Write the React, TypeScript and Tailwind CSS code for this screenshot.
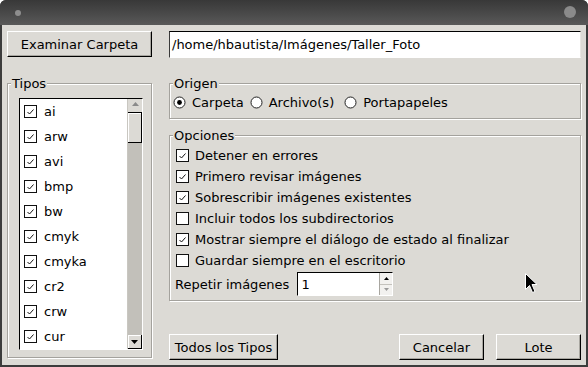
import React from "react";

const CheckBox = ({ checked }: { checked: boolean }) => (
  <svg width="13" height="13" viewBox="0 0 13 13" className="shrink-0">
    <rect x="0.5" y="0.5" width="12" height="12" fill="#fff" stroke="#111" />
    {checked && (
      <path d="M3.5 7 L5.5 9 L9.5 4.5" fill="none" stroke="#111" strokeWidth="1" />
    )}
  </svg>
);

const Radio = ({ selected }: { selected: boolean }) => (
  <svg width="13" height="13" viewBox="0 0 13 13" className="shrink-0">
    <circle cx="6.5" cy="6.5" r="5.5" fill="#fff" stroke="#222" />
    {selected && <circle cx="6.5" cy="6.5" r="2.4" fill="#000" />}
  </svg>
);

const Btn = ({ children, className = "" }: { children: React.ReactNode; className?: string }) => (
  <div
    className={
      "h-[26px] flex items-center justify-center bg-[#dcdad5] border border-t-white border-l-white border-b-black border-r-black shadow-[inset_-1px_-1px_0_#a8a6a0] " +
      className
    }
  >
    {children}
  </div>
);

const tipos = ["ai", "arw", "avi", "bmp", "bw", "cmyk", "cmyka", "cr2", "crw", "cur"];

const opciones: [string, boolean][] = [
  ["Detener en errores", true],
  ["Primero revisar imágenes", true],
  ["Sobrescribir imágenes existentes", true],
  ["Incluir todos los subdirectorios", false],
  ["Mostrar siempre el diálogo de estado al finalizar", true],
  ["Guardar siempre en el escritorio", false],
];

export default function App() {
  return (
    <div className="relative w-[588px] h-[367px] bg-[#3c3c3c] rounded-t-[6px] overflow-hidden flex flex-col font-['DejaVu_Sans',sans-serif] text-[13px] leading-[15px] text-black">
      {/* title bar */}
      <div className="h-[25px] shrink-0 bg-linear-to-b from-[#383838] to-[#595959] flex items-center justify-between pl-[15px] pr-[12px]">
        <div className="w-[6px] h-[6px] rounded-full bg-[#8e8e8e]" />
        <div className="w-[12px] h-[12px] rounded-full bg-[#8a8a8a] -mt-[1px]" />
      </div>

      {/* body */}
      <div className="flex-1 mx-[2px] mb-[3px] bg-[#dcdad5] flex gap-[17px] pt-[6px] pb-[5px] px-[5px]">
        {/* left column */}
        <div className="w-[145px] flex flex-col">
          <Btn>Examinar Carpeta</Btn>
          <div className="mt-[26px] mb-[2px] flex-1 flex flex-col border border-[#a4a29d] shadow-[inset_1px_1px_0_#fff,1px_1px_0_#fff]">
            <div className="-mt-[8px] ml-[3px] w-fit px-[1px] bg-[#dcdad5]">Tipos</div>
            <div className="mt-[7px] ml-[11px] mr-[8px] mb-[7px] flex-1 flex border border-t-black border-l-black border-b-white border-r-white overflow-hidden">
              <div className="flex-1 bg-white flex flex-col overflow-hidden">
                {tipos.map((t) => (
                  <div key={t} className="h-[25px] shrink-0 flex items-center pl-[4px] gap-[7px]">
                    <CheckBox checked />
                    <span>{t}</span>
                  </div>
                ))}
              </div>
              {/* scrollbar */}
              <div className="w-[15px] flex flex-col border-l border-[#c9c7c1]">
                <div className="h-[14px] shrink-0 bg-[#dcdad5] border-b border-black flex items-start justify-center pt-[3px]">
                  <svg width="7" height="4" viewBox="0 0 7 4">
                    <path d="M0 4 L3.5 0 L7 4 Z" fill="#8a8a8a" />
                  </svg>
                </div>
                <div className="h-[30px] shrink-0 bg-[#dcdad5] border-r border-b border-black shadow-[inset_1px_1px_0_#fff]" />
                <div className="flex-1 bg-[#c2c0ba]" />
                <div className="h-[14px] shrink-0 bg-[#dcdad5] border-r border-b border-black shadow-[inset_1px_1px_0_#fff] flex items-center justify-center">
                  <svg width="7" height="4" viewBox="0 0 7 4">
                    <path d="M0 0 L7 0 L3.5 4 Z" fill="#000" />
                  </svg>
                </div>
              </div>
            </div>
          </div>
        </div>

        {/* right column */}
        <div className="w-[412px] flex flex-col">
          <div className="h-[27px] shrink-0 bg-white border border-t-black border-l-[#3a3a3a] border-b-white border-r-[#e8e6e2] flex items-center pl-[2px]">
            /home/hbautista/Imágenes/Taller_Foto
          </div>

          {/* Origen */}
          <div className="mt-[25px] flex flex-col border border-[#a4a29d] shadow-[inset_1px_1px_0_#fff,1px_1px_0_#fff]">
            <div className="-mt-[8px] ml-[3px] w-fit px-[1px] bg-[#dcdad5]">Origen</div>
            <div className="mt-[2px] mb-[7px] h-[18px] flex items-center pl-[3px]">
              <div className="flex items-center gap-[6px]">
                <Radio selected />
                <span>Carpeta</span>
              </div>
              <div className="flex items-center gap-[6px] ml-[6px]">
                <Radio selected={false} />
                <span>Archivo(s)</span>
              </div>
              <div className="flex items-center gap-[6px] ml-[10px]">
                <Radio selected={false} />
                <span>Portapapeles</span>
              </div>
            </div>
          </div>

          {/* Opciones */}
          <div className="mt-[16px] flex flex-col border border-[#a4a29d] shadow-[inset_1px_1px_0_#fff,1px_1px_0_#fff] pb-[4px]">
            <div className="-mt-[8px] ml-[3px] w-fit px-[1px] bg-[#dcdad5]">Opciones</div>
            <div className="mt-[2px] flex flex-col">
              {opciones.map(([label, c]) => (
                <div key={label} className="h-[21px] flex items-center pl-[6px] gap-[6px]">
                  <CheckBox checked={c} />
                  <span>{label}</span>
                </div>
              ))}
            </div>
            <div className="mt-[1px] h-[24px] flex items-center pl-[5px] gap-[8px]">
              <span>Repetir imágenes</span>
              <div className="w-[96px] h-[24px] flex bg-white border border-t-black border-l-black border-b-white border-r-white">
                <div className="flex-1 flex items-center pl-[3px]">1</div>
                <div className="w-[13px] flex flex-col border-l border-[#a8a6a0] bg-[#f2f1ef]">
                  <div className="flex-1 flex items-center justify-center border-b border-[#c4c2bd]">
                    <svg width="5" height="3" viewBox="0 0 5 3">
                      <path d="M0 3 L2.5 0 L5 3 Z" fill="#000" />
                    </svg>
                  </div>
                  <div className="flex-1 flex items-center justify-center">
                    <svg width="5" height="3" viewBox="0 0 5 3">
                      <path d="M0 0 L5 0 L2.5 3 Z" fill="#9a9a9a" />
                    </svg>
                  </div>
                </div>
              </div>
            </div>
          </div>

          <div className="flex-1" />

          <div className="flex items-end">
            <Btn className="w-[109px]">Todos los Tipos</Btn>
            <div className="flex-1" />
            <Btn className="w-[85px]">Cancelar</Btn>
            <Btn className="w-[85px] ml-[12px]">Lote</Btn>
          </div>
        </div>
      </div>

      {/* mouse pointer */}
      <svg
        className="absolute left-[525px] top-[273px]"
        width="13"
        height="21"
        viewBox="0 0 13 21"
      >
        <path
          d="M0.5 0.5 L0.5 16.5 L4.5 12.5 L7.5 19.5 L10 18.5 L7 11.5 L12 11.5 Z"
          fill="#000"
          stroke="#fff"
          strokeWidth="1"
          strokeLinejoin="round"
        />
      </svg>
    </div>
  );
}
